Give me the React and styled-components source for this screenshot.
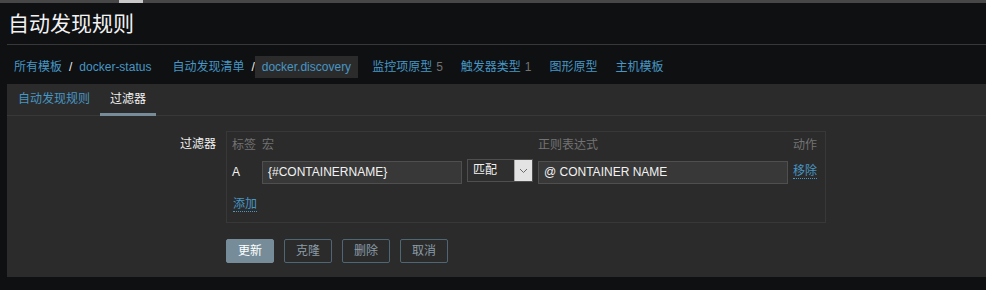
import React from "react";
import styled, { createGlobalStyle, css } from "styled-components";

const Global = createGlobalStyle`
  html, body { margin: 0; padding: 0; background: #0e1012; }
  body {
    font-family: "Liberation Sans", Arial, "Noto Sans CJK SC", sans-serif;
    font-size: 12px;
    color: #f2f2f2;
    overflow: hidden;
  }
  * { box-sizing: border-box; }
`;

const Page = styled.div`
  width: 986px;
  height: 290px;
  background: #0e1012;
`;

const ScrollTrack = styled.div`
  height: 3px;
  background: #474747;
  display: flex;
  padding-left: 119px;
`;

const ScrollThumb = styled.div`
  width: 24px;
  height: 3px;
  background: #c8c8c8;
`;

const Header = styled.header`
  margin-left: 7px;
  height: 42px;
  display: flex;
  align-items: center;
  border-bottom: 1px solid #383838;
`;

const Title = styled.h1`
  margin: 0 0 0 1px;
  font-size: 21px;
  line-height: 21px;
  font-weight: normal;
  color: #f2f2f2;
`;

const Breadcrumbs = styled.nav`
  margin-left: 7px;
  height: 39px;
  padding-top: 11px;
  display: flex;
  align-items: flex-start;
  gap: 4px;
`;

const Crumbs = styled.div`
  display: flex;
  align-items: center;
  height: 22px;
  margin-right: ${(p) => (p.$spaced ? "3px" : "0")};
`;

const Crumb = styled.a`
  display: inline-flex;
  align-items: center;
  height: 22px;
  padding: 0 7px;
  color: #4796c4;
  line-height: 22px;
  text-decoration: none;
  white-space: nowrap;
  background: ${(p) => (p.$selected ? "#2b2b2b" : "transparent")};
`;

const Sep = styled.span`
  color: #f2f2f2;
  line-height: 22px;
`;

const Count = styled.span`
  color: #737373;
  margin-left: 4px;
`;

const Panel = styled.section`
  margin-left: 7px;
  height: 193px;
  background: #2b2b2b;
`;

const TabList = styled.div`
  display: flex;
  height: 32px;
  padding-left: 1px;
  border-bottom: 1px solid #383838;
`;

const Tab = styled.a`
  display: block;
  height: 32px;
  margin-bottom: -1px;
  padding: 8px 10px 0;
  line-height: 14px;
  text-decoration: none;
  color: ${(p) => (p.$active ? "#f2f2f2" : "#4796c4")};
  border-bottom: 3px solid ${(p) => (p.$active ? "#768d99" : "transparent")};
`;

const Form = styled.div`
  display: grid;
  grid-template-columns: 209px auto;
  column-gap: 10px;
  padding-top: 15px;
`;

const Label = styled.label`
  text-align: right;
  padding-top: 6px;
  line-height: 14px;
  color: #f2f2f2;
`;

const FilterTable = styled.div`
  width: 600px;
  border: 1px solid #383838;
  padding: 4px 10px 10px 5px;
  display: flex;
  flex-direction: column;
`;

const cols = css`
  display: grid;
  grid-template-columns: 25px 200px 66px 250px 24px;
  column-gap: 5px;
`;

const HeadRow = styled.div`
  ${cols};
  height: 18px;
  line-height: 18px;
  color: #737373;
`;

const DataRow = styled.div`
  ${cols};
  height: 25px;
  margin-top: 5px;
  align-items: start;
`;

const Cell = styled.div`
  line-height: ${(p) => p.$lh || "18px"};
  padding-top: ${(p) => p.$pt || "0"};
  white-space: nowrap;
`;

const TextInput = styled.div`
  margin-top: 2px;
  height: 23px;
  border: 1px solid #4f4f4f;
  background: #383838;
  padding: 0 5px;
  line-height: 21px;
  color: #f2f2f2;
  white-space: nowrap;
`;

const Select = styled.div`
  height: 23px;
  border: 1px solid #4f4f4f;
  background: #2e2e2e;
  display: flex;
  align-items: stretch;
`;

const SelectText = styled.span`
  flex: 1;
  padding-left: 5px;
  line-height: 21px;
  color: #f2f2f2;
`;

const SelectArrow = styled.span`
  width: 18px;
  background: #e3e3e3;
  border-left: 1px solid #a8a8a8;
  display: flex;
  align-items: center;
  justify-content: center;
`;

const Link = styled.a`
  display: inline-block;
  color: #4796c4;
  line-height: 14px;
  text-decoration: none;
  border-bottom: 1px dotted #4796c4;
`;

const AddRow = styled.div`
  margin-top: 13px;
  padding-left: 1px;
  height: 15px;
`;

const Buttons = styled.div`
  grid-column: 2;
  display: flex;
  gap: 10px;
  margin-top: 16px;
`;

const Button = styled.button`
  height: 24px;
  padding: 0 11px;
  font-family: inherit;
  font-size: 12px;
  line-height: 22px;
  border-radius: 2px;
  border: 1px solid ${(p) => (p.$primary ? "#768d99" : "#4f6674")};
  background: ${(p) => (p.$primary ? "#768d99" : "transparent")};
  color: ${(p) => (p.$primary ? "#ffffff" : "#8a9ca7")};
  cursor: pointer;
`;

const Chevron = () => (
  <svg width="9" height="6" viewBox="0 0 9 6">
    <path d="M1 1l3.5 3.5L8 1" fill="none" stroke="#6a6a6a" strokeWidth="1" />
  </svg>
);

export default function App() {
  return (
    <Page>
      <Global />
      <ScrollTrack>
        <ScrollThumb />
      </ScrollTrack>
      <Header>
        <Title>自动发现规则</Title>
      </Header>
      <Breadcrumbs>
        <Crumbs $spaced>
          <Crumb>所有模板</Crumb>
          <Sep>/</Sep>
          <Crumb>docker-status</Crumb>
        </Crumbs>
        <Crumbs $spaced>
          <Crumb>自动发现清单</Crumb>
          <Sep>/</Sep>
          <Crumb $selected>docker.discovery</Crumb>
        </Crumbs>
        <Crumbs>
          <Crumb>
            监控项原型<Count>5</Count>
          </Crumb>
        </Crumbs>
        <Crumbs>
          <Crumb>
            触发器类型<Count>1</Count>
          </Crumb>
        </Crumbs>
        <Crumbs>
          <Crumb>图形原型</Crumb>
        </Crumbs>
        <Crumbs>
          <Crumb>主机模板</Crumb>
        </Crumbs>
      </Breadcrumbs>
      <Panel>
        <TabList>
          <Tab>自动发现规则</Tab>
          <Tab $active>过滤器</Tab>
        </TabList>
        <Form>
          <Label>过滤器</Label>
          <FilterTable>
            <HeadRow>
              <Cell>标签</Cell>
              <Cell>宏</Cell>
              <Cell />
              <Cell>正则表达式</Cell>
              <Cell>动作</Cell>
            </HeadRow>
            <DataRow>
              <Cell $lh="14px" $pt="6px">A</Cell>
              <TextInput>{"{#CONTAINERNAME}"}</TextInput>
              <Select>
                <SelectText>匹配</SelectText>
                <SelectArrow>
                  <Chevron />
                </SelectArrow>
              </Select>
              <TextInput>@ CONTAINER NAME</TextInput>
              <Cell $lh="14px" $pt="5px">
                <Link>移除</Link>
              </Cell>
            </DataRow>
            <AddRow>
              <Link>添加</Link>
            </AddRow>
          </FilterTable>
          <Buttons>
            <Button $primary>更新</Button>
            <Button>克隆</Button>
            <Button>删除</Button>
            <Button>取消</Button>
          </Buttons>
        </Form>
      </Panel>
    </Page>
  );
}
